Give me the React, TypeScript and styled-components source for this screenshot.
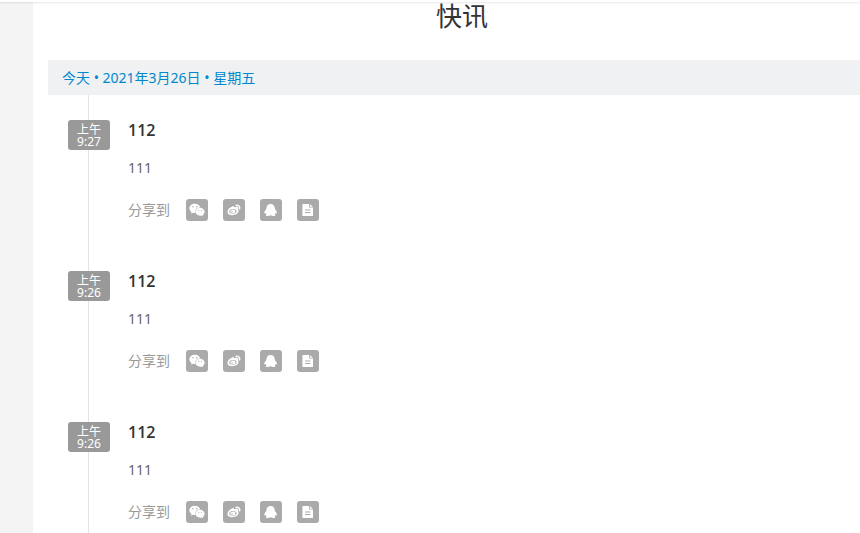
import React from "react";
import styled, { createGlobalStyle } from "styled-components";
import { FaWeixin } from "react-icons/fa";

const GlobalStyle = createGlobalStyle`
  * { box-sizing: border-box; }
  body {
    margin: 0;
    background: #f4f4f4;
    color: #333;
    font-family: "Noto Sans", "Noto Sans CJK SC", sans-serif;
    font-size: 14px;
    line-height: 20px;
  }
`;

const Page = styled.div`
  display: flex;
  flex-direction: column;
  height: 100vh;
  overflow: hidden;
`;

const TopBar = styled.header`
  flex: none;
  height: 2px;
  background: #fff;
  box-shadow: 0 1px 2px rgba(0, 0, 0, 0.1);
  z-index: 1;
`;

const Panel = styled.main`
  flex: 1;
  display: flex;
  flex-direction: column;
  min-height: 0;
  margin-left: 33px;
  padding-left: 15px;
  background: #fff;
`;

const Title = styled.h1`
  flex: none;
  margin: 0;
  padding: 0 0 30px 16px;
  font-size: 26px;
  font-weight: 400;
  line-height: 28px;
  text-align: center;
`;

const DateBar = styled.h2`
  flex: none;
  margin: 0;
  padding: 0 14px;
  background: #eff1f3;
  color: #0088cc;
  font-size: 14px;
  font-weight: 400;
  line-height: 35px;
`;

const Timeline = styled.ol`
  flex: 1 0 auto;
  margin: 0 0 0 40px;
  padding: 0;
  border-left: 1px solid #e3e3e3;
  list-style: none;
`;

const Entry = styled.li`
  display: flex;
  align-items: flex-start;
  gap: 18px;
  margin-left: -21px;
  padding: 25px 0;
`;

const TimeBadge = styled.time`
  display: flex;
  flex-direction: column;
  flex: none;
  width: 42px;
  height: 30px;
  padding: 4px 0 2px;
  border-radius: 3px;
  background: #999;
  color: #fff;
  font-size: 12px;
  line-height: 12px;
  text-align: center;
`;

const Body = styled.article`
  flex: 1;
`;

const Heading = styled.h3`
  margin: 0 0 18px;
  font-family: "Open Sans", "Noto Sans CJK SC", sans-serif;
  font-size: 16px;
  font-weight: 600;
  line-height: 20px;
`;

const Text = styled.p`
  margin: 0 0 21px;
  color: #666;
`;

const Share = styled.div`
  display: flex;
  align-items: center;
  gap: 15px;
  color: #999;
  line-height: 22px;
`;

const ShareLabel = styled.span`
  min-width: 43px;
`;

const ShareButton = styled.button`
  display: flex;
  align-items: center;
  justify-content: center;
  width: 22px;
  height: 22px;
  padding: 0;
  border: 0;
  border-radius: 3px;
  background: #aaa;
  color: #fff;
  cursor: pointer;
`;

const WeiboIcon = () => (
  <svg width="14" height="14" viewBox="0 0 14 14" aria-hidden="true">
    <path
      fill="currentColor"
      fillRule="evenodd"
      d="M5.6 3.2c1-.3 1.700.2 1.500 1.200 1.400-.6 3-.5 2.600 1.100 2.600.7 2.200 3.400.5 5-2.200 2-6.400 2.300-8.700.7C-.8 9.500.7 5 5.600 3.200ZM5.800 6C3.700 6.100 2.200 7.300 2.200 8.800s1.500 2.200 3.600 2.100 3.800-1.300 3.800-2.700S7.900 5.900 5.800 6Z"
    />
    <path
      fill="currentColor"
      fillRule="evenodd"
      d="M6 6.600c1.600 0 2.600.9 2.400 2.100-.2 1.200-1.600 2-3.100 1.900-1.500-.1-2.300-1-2-2.100C3.600 7.300 4.800 6.600 6 6.600ZM4.900 8.300a.7.700 0 1 0 .1 1.400.7.700 0 0 0-.1-1.400Z"
    />
    <path
      d="M9 2.300c2.500-.7 4.300 1.200 3.600 3.600M9.300 4.200c1-.2 1.700.5 1.400 1.400"
      fill="none"
      stroke="currentColor"
      strokeWidth="1.4"
      strokeLinecap="round"
    />
  </svg>
);

const QqIcon = () => (
  <svg width="14" height="14" viewBox="0 0 14 14" aria-hidden="true">
    <path
      fill="currentColor"
      d="M6.600 1C3.900 1 2.500 2.800 2.500 5c0 .5-.4.800-.5 1.500C.8 7.800.1 9.200.3 10.300c.1.600.8.200 1.200-.5.2.7.500 1.200 1 1.600-1.200.6-.8 1.600.9 1.600 1.200 0 2.300-.2 3.200-.7.900.5 2 .7 3.200.7 1.700 0 2.100-1 .9-1.600.5-.4.800-.9 1-1.600.4.700 1.100 1.100 1.200.5.200-1.100-.5-2.500-1.700-3.800-.1-.7-.5-1-.5-1.500C10.700 2.800 9.300 1 6.600 1Z"
    />
  </svg>
);

const NoteIcon = () => (
  <svg width="14" height="14" viewBox="0 0 14 14" aria-hidden="true">
    <path
      fill="currentColor"
      fillRule="evenodd"
      d="M2 1H8v3.600h4v7.800a.6.6 0 0 1-.6.6H2a.6.6 0 0 1-.6-.6V1.600A.6.6 0 0 1 2 1ZM4 6.500v1h5.500v-1ZM4 9v1h5.500V9Z"
    />
    <path fill="currentColor" d="M8.800 1l3 2.800h-3Z" />
  </svg>
);

const entries = [
  { id: 1, time: "9:27", title: "112", text: "111" },
  { id: 2, time: "9:26", title: "112", text: "111" },
  { id: 3, time: "9:26", title: "112", text: "111" },
];

const targets = [
  { name: "微信", icon: <FaWeixin size={16} /> },
  { name: "微博", icon: <WeiboIcon /> },
  { name: "QQ", icon: <QqIcon /> },
  { name: "文章", icon: <NoteIcon /> },
];

export default function App() {
  return (
    <Page>
      <GlobalStyle />
      <TopBar />
      <Panel>
        <Title>快讯</Title>
        <DateBar>今天 • 2021年3月26日 • 星期五</DateBar>
        <Timeline>
          {entries.map((entry) => (
            <Entry key={entry.id}>
              <TimeBadge>
                <span>上午</span>
                <span>{entry.time}</span>
              </TimeBadge>
              <Body>
                <Heading>{entry.title}</Heading>
                <Text>{entry.text}</Text>
                <Share>
                  <ShareLabel>分享到</ShareLabel>
                  {targets.map((target) => (
                    <ShareButton key={target.name} type="button" aria-label={target.name}>
                      {target.icon}
                    </ShareButton>
                  ))}
                </Share>
              </Body>
            </Entry>
          ))}
        </Timeline>
      </Panel>
    </Page>
  );
}
